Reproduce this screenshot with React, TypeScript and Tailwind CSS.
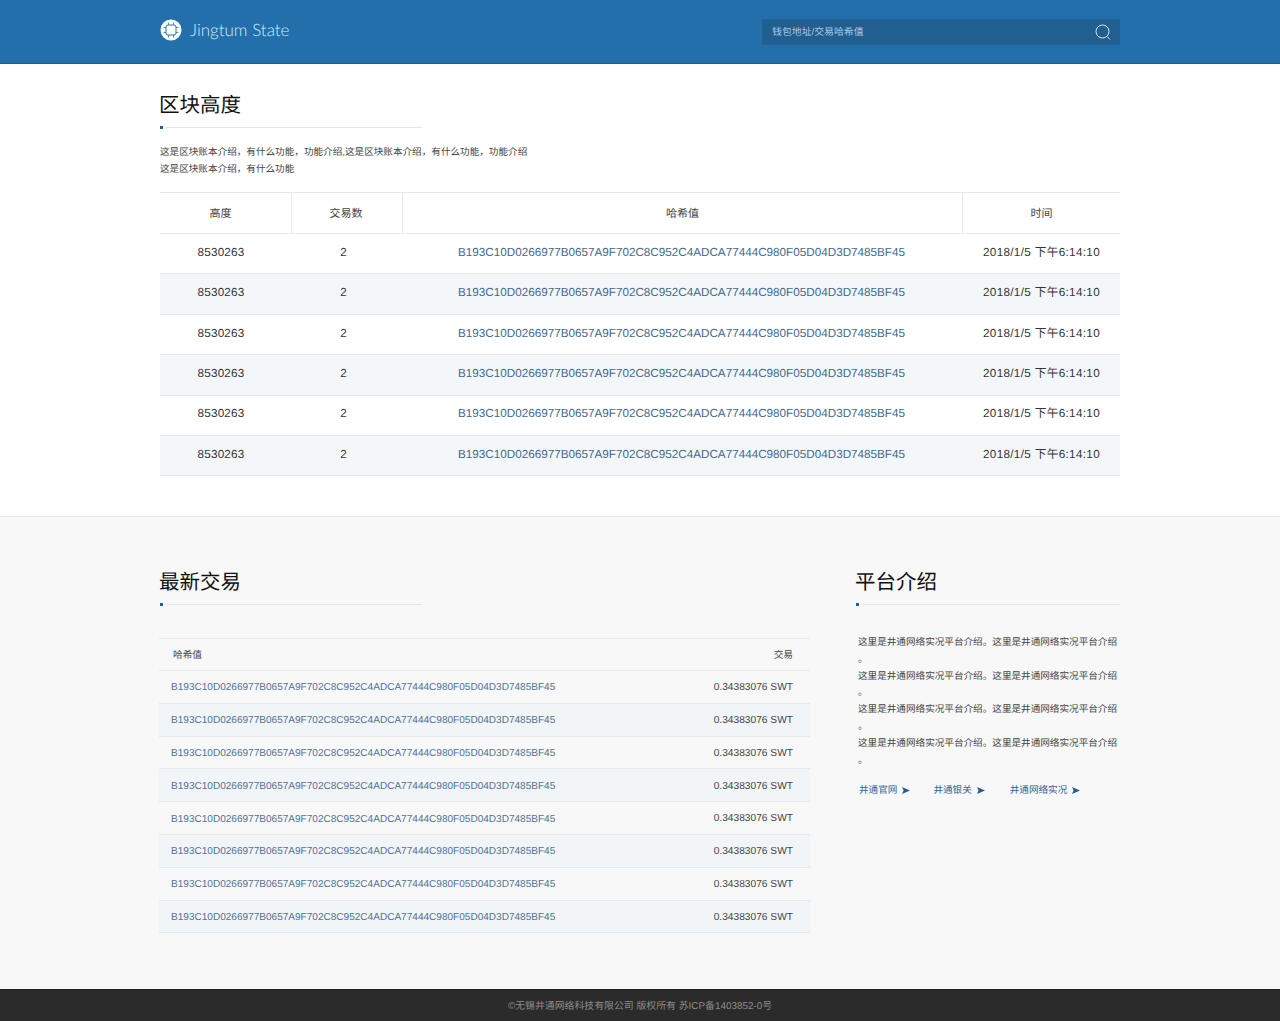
const hash = 'B193C10D0266977B0657A9F702C8C952C4ADCA77444C980F05D04D3D7485BF45'
const font = "font-['Liberation_Sans','Noto_Sans_CJK_SC',sans-serif]"

function SectionTitle({ title, width }: { title: string; width: string }) {
  return (
    <div className={width}>
      <h2 className="text-[20.5px] pt-[2px] leading-[26px] text-[#111] -ml-px">{title}</h2>
      <div className="flex items-center gap-[3px] mt-[6px] h-[4px]">
        <span className="w-[3px] h-[3px] bg-[#1f5f96] shrink-0" />
        <span className="flex-1 h-px bg-[#e3e5e7]" />
      </div>
    </div>
  )
}

function Logo() {
  return (
    <svg width="22" height="22" viewBox="0 0 22 22" className="shrink-0">
      <circle cx="11" cy="11" r="10.5" fill="#fff" />
      <rect x="6" y="6" width="10" height="10" rx="2" fill="none" stroke="#2b72a8" strokeWidth="1" />
      <path d="M8.5 3.5V6M13.5 3.5V6M8.5 16v2.5M13.5 16v2.5M3.5 8.5H6M3.5 13.5H6M16 8.5h2.5M16 13.5h2.5" stroke="#2b72a8" strokeWidth="0.8" />
    </svg>
  )
}

export default function App() {
  const links = [
    { label: '井通官网', gap: 'mr-[23px]' },
    { label: '井通银关', gap: 'mr-[25px]' },
    { label: '井通网络实况', gap: '' },
  ]

  return (
    <div className={`w-[1280px] min-h-[1021px] bg-white [text-rendering:geometricPrecision] ${font}`}>
      {/* Header */}
      <header className="h-[64px] bg-[#236fab] border-b border-[#1b5a8d]">
        <div className="w-[960px] mx-auto h-full flex items-center justify-between">
          <div className="flex items-center gap-[8px] -mt-[3px]">
            <Logo />
            <span className="font-['Lato'] font-light text-[17px] text-[#d8e8f4]">Jingtum State</span>
          </div>
          <div className="w-[358px] h-[26px] mt-[1px] bg-[#215f91] flex items-center justify-between pl-[10px] pr-[8px]">
            <span className="text-[9.9px] pt-[2px] text-[#a9c6dc]">钱包地址/交易哈希值</span>
            <svg width="18" height="18" viewBox="0 0 18 18" fill="none" stroke="#d5e6f2" strokeWidth="1">
              <circle cx="8.5" cy="8.5" r="6.5" />
              <path d="M13 13.5l3 3" />
            </svg>
          </div>
        </div>
      </header>

      {/* Block height */}
      <section className="w-[960px] mx-auto pt-[27px] h-[452px]">
        <SectionTitle title="区块高度" width="w-[262px]" />
        <p className="mt-[15px] text-[9.6px] leading-[17px] text-[#444]">
          这是区块账本介绍，有什么功能，功能介绍,这是区块账本介绍，有什么功能，功能介绍
          <br />
          这是区块账本介绍，有什么功能
        </p>
        <div className="mt-[14px] border-t border-[#e6e8ea]">
          <div className="grid grid-cols-[132px_111px_560px_157px] h-[41px] items-stretch border-b border-[#e6e8ea] text-[11px] text-[#444] text-center">
            <div className="flex items-center justify-center border-r border-[#e6e8ea] pr-[10px] pt-[3px]">高度</div>
            <div className="flex items-center justify-center border-r border-[#e6e8ea] pr-[2px] pt-[3px]">交易数</div>
            <div className="flex items-center justify-center border-r border-[#e6e8ea] pt-[3px]">哈希值</div>
            <div className="flex items-center justify-center pt-[3px]">时间</div>
          </div>
          {[0, 1, 2, 3, 4, 5].map((i) => (
            <div
              key={i}
              className={`grid grid-cols-[132px_111px_560px_157px] h-[40.4px] pb-[2px] items-center border-b border-[#e6e8ea] text-[11.7px] text-center ${
                i % 2 ? 'bg-[#f3f7fa]' : 'bg-white'
              }`}
            >
              <div className="text-[#333] pr-[10px] tracking-[0.2px]">8530263</div>
              <div className="text-[#333] pl-[2px] -ml-[10px]">2</div>
              <div className="text-[#45698c] pr-[3px]">{hash}</div>
              <div className="text-[#333] tracking-[0.33px]">2018/1/5 下午6:14:10</div>
            </div>
          ))}
        </div>
      </section>

      {/* Latest + intro */}
      <section className="bg-[#f8f8f8] border-t border-[#e6e8ea] h-[473px]">
        <div className="w-[960px] mx-auto flex justify-between pt-[51px]">
          <div className="w-[650px]">
            <SectionTitle title="最新交易" width="w-[262px]" />
            <div className="mt-[32px] -ml-px w-[651px] border-t border-[#e6e8ea]">
              <div className="flex justify-between items-center h-[32px] pt-[4px] pl-[14px] pr-[17px] border-b border-[#e6e8ea] text-[9.7px] text-[#444]">
                <span>哈希值</span>
                <span>交易</span>
              </div>
              {[0, 1, 2, 3, 4, 5, 6, 7].map((i) => (
                <div
                  key={i}
                  className={`flex justify-between items-center h-[32.8px] pt-[2px] pl-[12px] pr-[17px] border-b border-[#e6e8ea] text-[10.05px] ${
                    i % 2 ? 'bg-[#f1f5f8]' : ''
                  }`}
                >
                  <span className="text-[#527396]">{hash}</span>
                  <span className="text-[#444] text-[10.2px]">0.34383076 SWT</span>
                </div>
              ))}
            </div>
          </div>
          <div className="w-[264px]">
            <SectionTitle title="平台介绍" width="w-full" />
            <div className="mt-[29px] pl-[2px] w-[262px] text-[9.6px] leading-[16.8px] text-[#444] [line-break:anywhere]">
              {[0, 1, 2, 3].map((i) => (
                <p key={i}>这里是井通网络实况平台介绍。这里是井通网络实况平台介绍。</p>
              ))}
            </div>
            <div className="flex items-center mt-[15px] pl-[3px] text-[9.6px] text-[#2d6594]">
              {links.map((l) => (
                <span key={l.label} className={`flex items-center gap-[4px] ${l.gap}`}>
                  {l.label}
                  <svg width="8" height="7" viewBox="0 0 8 7" className="ml-[1px] mb-[2px]">
                    <path d="M0 0l8 3.5L0 7l1.6-3.5z" fill="#1f5f96" />
                  </svg>
                </span>
              ))}
            </div>
          </div>
        </div>
      </section>

      {/* Footer */}
      <footer className="h-[32px] pt-[3px] bg-[#2b2b2b] border-t border-[#222] flex items-center justify-center text-[9.9px] text-[#8b8b8b]">
        ©无锡井通网络科技有限公司 版权所有 苏ICP备1403852-0号
      </footer>
    </div>
  )
}
